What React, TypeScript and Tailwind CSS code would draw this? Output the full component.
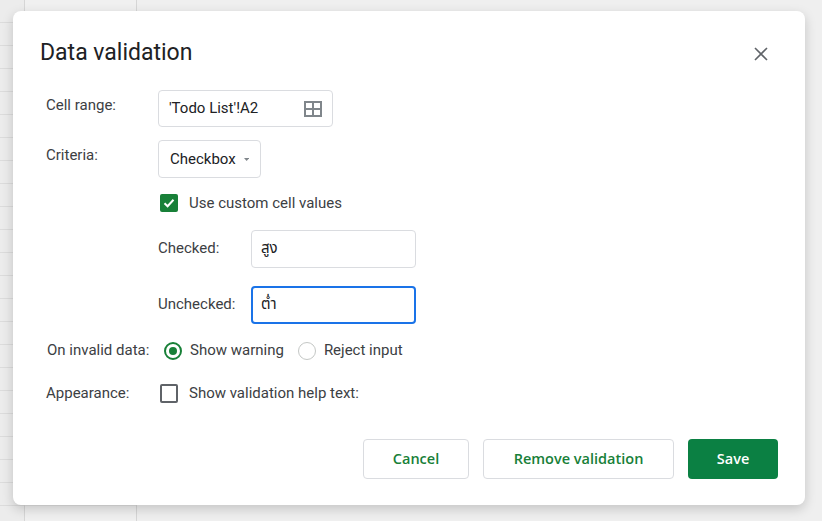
import React from "react";

export default function App() {
  const rows = Array.from({ length: 24 });
  return (
    <div className="relative w-[822px] h-[521px] overflow-hidden bg-[#efefef]" style={{ fontFamily: "Roboto, 'Noto Sans', 'Noto Sans Thai', sans-serif" }}>
      <div className="flex h-full">
        <div className="w-[25px] bg-[#ececec] border-r border-[#d6d6d6] flex flex-col">
          {rows.map((_, i) => <div key={i} className="h-[23px] shrink-0 border-b border-[#dcdcdc]" />)}
        </div>
        <div className="w-[112px] bg-[#f0f0f0] border-r border-[#d6d6d6] flex flex-col">
          {rows.map((_, i) => <div key={i} className="h-[23px] shrink-0 border-b border-[#e2e2e2]" />)}
        </div>
        <div className="flex-1 bg-[#efefef]" />
      </div>

      <div className="absolute left-[13px] top-[11px] w-[792px] h-[494px] bg-white rounded-[8px] shadow-[0_4px_12px_rgba(0,0,0,0.18)] text-[15px] text-[#3c4043]">
        <div className="flex items-center justify-between pl-[27px] pr-[37px] pt-[22px] h-[76px]">
          <div className="text-[23px] text-[#202124] leading-none pb-[16px]">Data validation</div>
          <svg width="14" height="14" viewBox="0 0 14 14" className="mb-[12px]"><path d="M1 1L13 13M13 1L1 13" stroke="#5f6368" strokeWidth="1.6" /></svg>
        </div>

        <div className="flex items-start mt-[3px]">
          <div className="w-[145px] pl-[33px] pt-[4px]">Cell range:</div>
          <div className="w-[175px] h-[37px] border border-[#dadce0] rounded-[4px] flex items-center justify-between px-[10px]">
            <span className="text-[#202124]">'Todo List'!A2</span>
            <svg width="18" height="16" viewBox="0 0 18 16"><rect x="1" y="1" width="16" height="14" fill="none" stroke="#80868b" strokeWidth="2" /><path d="M9 1V15M1 8H17" stroke="#80868b" strokeWidth="2" /></svg>
          </div>
        </div>

        <div className="flex items-start mt-[13px]">
          <div className="w-[145px] pl-[33px] pt-[4px]">Criteria:</div>
          <div className="w-[103px] h-[38px] border border-[#dadce0] rounded-[4px] flex items-center px-[11px] gap-[8px] text-[#202124]">
            <span>Checkbox</span>
            <svg width="9" height="5" viewBox="0 0 9 5"><path d="M0 0H9L4.5 5Z" fill="#80868b" /></svg>
          </div>
        </div>

        <div className="flex items-center ml-[147px] mt-[14px] gap-[11px]">
          <div className="w-[18px] h-[18px] rounded-[2px] bg-[#188038] flex items-center justify-center">
            <svg width="14" height="14" viewBox="0 0 14 14"><path d="M2.5 7.2L5.6 10.2L11.5 3.8" fill="none" stroke="white" strokeWidth="2" /></svg>
          </div>
          <span className="text-[#3c4043]">Use custom cell values</span>
        </div>

        <div className="flex items-center ml-[145px] mt-[15px]">
          <div className="w-[93px]">Checked:</div>
          <div className="w-[165px] h-[38px] border border-[#dadce0] rounded-[4px] flex items-center px-[9px] text-[#202124]">สูง</div>
        </div>

        <div className="flex items-center ml-[145px] mt-[18px]">
          <div className="w-[93px]">Unchecked:</div>
          <div className="w-[165px] h-[38px] border-2 border-[#1a73e8] rounded-[4px] flex items-center px-[8px] text-[#202124]">ต่ำ</div>
        </div>

        <div className="flex items-center mt-[17px] h-[20px]">
          <div className="w-[151px] pl-[34px]">On invalid data:</div>
          <div className="w-[18px] h-[18px] rounded-full border-2 border-[#188038] flex items-center justify-center">
            <div className="w-[8px] h-[8px] rounded-full bg-[#188038]" />
          </div>
          <span className="ml-[8px]">Show warning</span>
          <div className="ml-[14px] w-[18px] h-[18px] rounded-full border border-[#c4c7c5]" />
          <span className="ml-[8px]">Reject input</span>
        </div>

        <div className="flex items-center mt-[23px] h-[20px]">
          <div className="w-[147px] pl-[33px]">Appearance:</div>
          <div className="w-[18px] h-[19px] rounded-[2px] border-2 border-[#5f6368]" />
          <span className="ml-[11px]">Show validation help text:</span>
        </div>

        <div className="flex justify-end gap-[14px] pr-[27px] mt-[35px] text-[14.5px] font-semibold" style={{ fontFamily: "'Open Sans', Roboto, sans-serif" }}>
          <div className="w-[106px] h-[40px] border border-[#dadce0] rounded-[4px] flex items-center justify-center text-[#188038]">Cancel</div>
          <div className="w-[191px] h-[40px] border border-[#dadce0] rounded-[4px] flex items-center justify-center text-[#188038]">Remove validation</div>
          <div className="w-[90px] h-[40px] rounded-[4px] bg-[#0b8043] flex items-center justify-center text-white">Save</div>
        </div>
      </div>
    </div>
  );
}
